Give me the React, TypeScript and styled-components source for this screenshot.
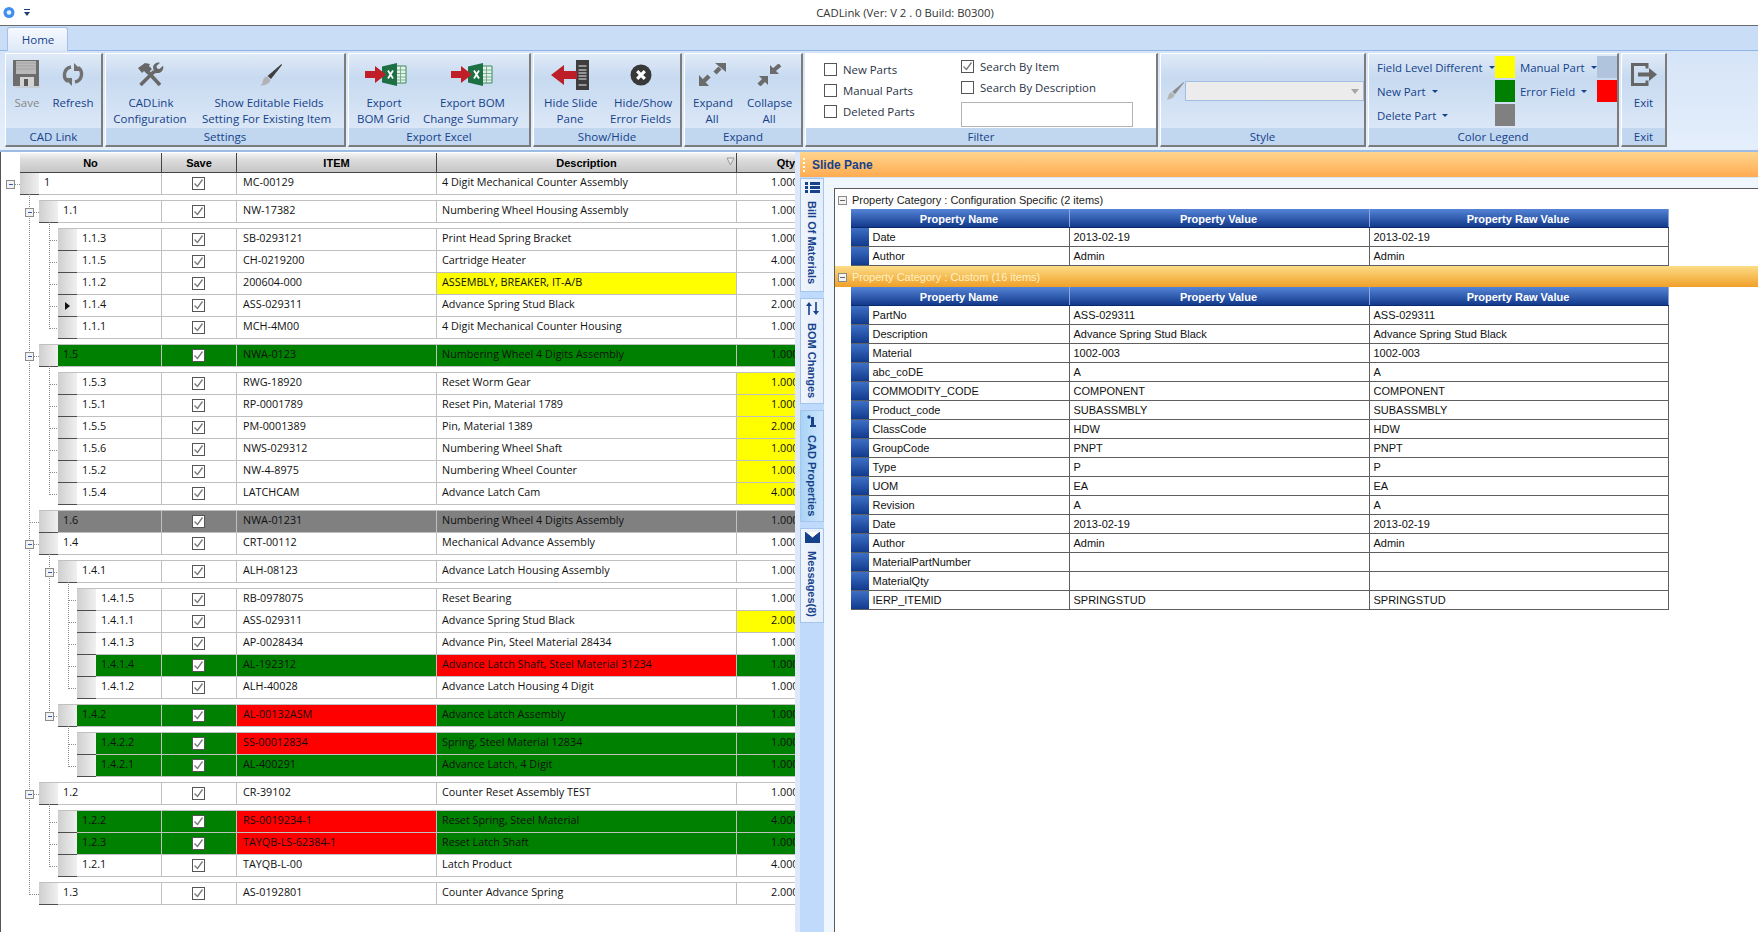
import React from 'react';
import styled, { createGlobalStyle } from 'styled-components';

const GREEN = '#008000';
const RED = '#ff0000';
const YELLOW = '#ffff00';
const GRAY = '#808080';
const UI_FONT = '"Open Sans", "Noto Sans", sans-serif';
const TABLE_FONT = '"Liberation Sans", Arial, sans-serif';

type BomRow = {
  no: string;
  item: string;
  desc: string;
  qty: string;
  level: number;
  gap?: boolean;
  box?: boolean;
  pointer?: boolean;
  rowBg?: string;
  itemBg?: string;
  descBg?: string;
  qtyBg?: string;
};

const bomRows: BomRow[] = [
  { no: '1', item: 'MC-00129', desc: '4 Digit Mechanical Counter Assembly', qty: '1.0000', level: 0, box: true },
  { no: '1.1', item: 'NW-17382', desc: 'Numbering Wheel Housing Assembly', qty: '1.0000', level: 1, gap: true, box: true },
  { no: '1.1.3', item: 'SB-0293121', desc: 'Print Head Spring Bracket', qty: '1.0000', level: 2, gap: true },
  { no: '1.1.5', item: 'CH-0219200', desc: 'Cartridge Heater', qty: '4.0000', level: 2 },
  { no: '1.1.2', item: '200604-000', desc: 'ASSEMBLY, BREAKER, IT-A/B', qty: '1.0000', level: 2, descBg: YELLOW },
  { no: '1.1.4', item: 'ASS-029311', desc: 'Advance Spring Stud Black', qty: '2.0000', level: 2, pointer: true },
  { no: '1.1.1', item: 'MCH-4M00', desc: '4 Digit Mechanical Counter Housing', qty: '1.0000', level: 2 },
  { no: '1.5', item: 'NWA-0123', desc: 'Numbering Wheel 4 Digits Assembly', qty: '1.0000', level: 1, gap: true, box: true, rowBg: GREEN },
  { no: '1.5.3', item: 'RWG-18920', desc: 'Reset Worm Gear', qty: '1.0000', level: 2, gap: true, qtyBg: YELLOW },
  { no: '1.5.1', item: 'RP-0001789', desc: 'Reset Pin, Material 1789', qty: '1.0000', level: 2, qtyBg: YELLOW },
  { no: '1.5.5', item: 'PM-0001389', desc: 'Pin, Material 1389', qty: '2.0000', level: 2, qtyBg: YELLOW },
  { no: '1.5.6', item: 'NWS-029312', desc: 'Numbering Wheel Shaft', qty: '1.0000', level: 2, qtyBg: YELLOW },
  { no: '1.5.2', item: 'NW-4-8975', desc: 'Numbering Wheel Counter', qty: '1.0000', level: 2, qtyBg: YELLOW },
  { no: '1.5.4', item: 'LATCHCAM', desc: 'Advance Latch Cam', qty: '4.0000', level: 2, qtyBg: YELLOW },
  { no: '1.6', item: 'NWA-01231', desc: 'Numbering Wheel 4 Digits Assembly', qty: '1.0000', level: 1, gap: true, rowBg: GRAY },
  { no: '1.4', item: 'CRT-00112', desc: 'Mechanical Advance Assembly', qty: '1.0000', level: 1, box: true },
  { no: '1.4.1', item: 'ALH-08123', desc: 'Advance Latch Housing Assembly', qty: '1.0000', level: 2, gap: true, box: true },
  { no: '1.4.1.5', item: 'RB-0978075', desc: 'Reset Bearing', qty: '1.0000', level: 3, gap: true },
  { no: '1.4.1.1', item: 'ASS-029311', desc: 'Advance Spring Stud Black', qty: '2.0000', level: 3, qtyBg: YELLOW },
  { no: '1.4.1.3', item: 'AP-0028434', desc: 'Advance Pin, Steel Material 28434', qty: '1.0000', level: 3 },
  { no: '1.4.1.4', item: 'AL-192312', desc: 'Advance Latch Shaft, Steel Material 31234', qty: '1.0000', level: 3, rowBg: GREEN, descBg: RED },
  { no: '1.4.1.2', item: 'ALH-40028', desc: 'Advance Latch Housing 4 Digit', qty: '1.0000', level: 3 },
  { no: '1.4.2', item: 'AL-00132ASM', desc: 'Advance Latch Assembly', qty: '1.0000', level: 2, gap: true, box: true, rowBg: GREEN, itemBg: RED },
  { no: '1.4.2.2', item: 'SS-00012834', desc: 'Spring, Steel Material 12834', qty: '1.0000', level: 3, gap: true, rowBg: GREEN, itemBg: RED },
  { no: '1.4.2.1', item: 'AL-400291', desc: 'Advance Latch, 4 Digit', qty: '1.0000', level: 3, rowBg: GREEN },
  { no: '1.2', item: 'CR-39102', desc: 'Counter Reset Assembly TEST', qty: '1.0000', level: 1, gap: true, box: true },
  { no: '1.2.2', item: 'RS-0019234-1', desc: 'Reset Spring, Steel Material', qty: '4.0000', level: 2, gap: true, rowBg: GREEN, itemBg: RED },
  { no: '1.2.3', item: 'TAYQB-LS-62384-1', desc: 'Reset Latch Shaft', qty: '1.0000', level: 2, rowBg: GREEN, itemBg: RED },
  { no: '1.2.1', item: 'TAYQB-L-00', desc: 'Latch Product', qty: '4.0000', level: 2 },
  { no: '1.3', item: 'AS-0192801', desc: 'Counter Advance Spring', qty: '2.0000', level: 1, gap: true },
];

const configProps = [
  ['Date', '2013-02-19', '2013-02-19'],
  ['Author', 'Admin', 'Admin'],
];

const customProps = [
  ['PartNo', 'ASS-029311', 'ASS-029311'],
  ['Description', 'Advance Spring Stud Black', 'Advance Spring Stud Black'],
  ['Material', '1002-003', '1002-003'],
  ['abc_coDE', 'A', 'A'],
  ['COMMODITY_CODE', 'COMPONENT', 'COMPONENT'],
  ['Product_code', 'SUBASSMBLY', 'SUBASSMBLY'],
  ['ClassCode', 'HDW', 'HDW'],
  ['GroupCode', 'PNPT', 'PNPT'],
  ['Type', 'P', 'P'],
  ['UOM', 'EA', 'EA'],
  ['Revision', 'A', 'A'],
  ['Date', '2013-02-19', '2013-02-19'],
  ['Author', 'Admin', 'Admin'],
  ['MaterialPartNumber', '', ''],
  ['MaterialQty', '', ''],
  ['IERP_ITEMID', 'SPRINGSTUD', 'SPRINGSTUD'],
];

const GlobalStyle = createGlobalStyle`
  html, body {
    margin: 0;
    padding: 0;
    background: #fff;
    overflow: hidden;
  }
  * {
    box-sizing: border-box;
  }
`;

const Page = styled.div`
  width: 1758px;
  height: 932px;
  display: flex;
  flex-direction: column;
  overflow: hidden;
  font-family: ${UI_FONT};
  background: #fff;
`;

/* title + tabs */
const TitleBar = styled.div`
  height: 26px;
  flex: none;
  display: flex;
  align-items: center;
  gap: 8px;
  padding-left: 3px;
  background: #fff;
  border-bottom: 1px solid #6b6b6b;
  position: relative;
`;

const TitleText = styled.div`
  flex: 1;
  text-align: center;
  padding-left: 14px;
  font-size: 11.3px;
  color: #333;
`;

const TabStrip = styled.div`
  height: 24px;
  flex: none;
  display: flex;
  align-items: flex-end;
  padding-left: 7px;
  background: #c9ddf6;
`;

const HomeTab = styled.div`
  width: 61px;
  height: 24px;
  margin-bottom: -1px;
  padding-left: 1px;
  display: flex;
  align-items: center;
  justify-content: center;
  font-size: 11.5px;
  color: #15428b;
  background: linear-gradient(#f6f9fe, #dde9f8);
  border: 1px solid #a3c0e8;
  border-bottom: none;
  border-radius: 3px 3px 0 0;
  position: relative;
  z-index: 2;
`;

/* ribbon */
const Ribbon = styled.div`
  height: 102px;
  flex: none;
  display: flex;
  gap: 2px;
  padding: 2px 0 3px 5px;
  border-top: 1px solid #8fb5e6;
  border-bottom: 2px solid #9dbce4;
  background: linear-gradient(#d5e4f7, #e5effc);
`;

const Group = styled.div<{ $w: number }>`
  width: ${(p) => p.$w}px;
  height: 94px;
  flex: none;
  display: flex;
  flex-direction: column;
  border-style: solid;
  border-width: 1px 2px 2px 1px;
  border-color: #fff #7c7c7c #7c7c7c #fff;
`;

const GroupBody = styled.div<{ $pad?: number; $gap?: number; $white?: boolean }>`
  height: 74px;
  flex: none;
  display: flex;
  gap: ${(p) => p.$gap ?? 0}px;
  padding-left: ${(p) => p.$pad ?? 0}px;
  background: ${(p) => (p.$white ? '#fff' : 'linear-gradient(#e0eaf7, #c7daf0 32%, #dbe7f7)')};
`;

const GroupLabel = styled.div`
  height: 17px;
  flex: none;
  display: flex;
  align-items: center;
  justify-content: center;
  font-size: 11.5px;
  color: #15428b;
  background: #c1d7f0;
`;

const BigButton = styled.div<{ $w: number; $off?: boolean }>`
  width: ${(p) => p.$w}px;
  flex: none;
  font-size: 11.5px;
  line-height: 16px;
  text-align: center;
  white-space: nowrap;
  color: ${(p) => (p.$off ? '#888' : '#15428b')};
`;

const IconSlot = styled.div<{ $shift?: number }>`
  height: 41px;
  width: 100%;
  display: flex;
  align-items: center;
  justify-content: center;
  padding-left: ${(p) => p.$shift ?? 0}px;
`;

// the first caption line of some buttons sits off the second line's centre
const CaptionLine = styled.span<{ $shift: number }>`
  display: block;
  padding-left: ${(p) => p.$shift}px;
`;

/* filter */
const FilterCol = styled.div<{ $w: number; $top: number; $left: number; $gap: number }>`
  width: ${(p) => p.$w}px;
  margin-left: ${(p) => p.$left}px;
  padding-top: ${(p) => p.$top}px;
  display: flex;
  flex-direction: column;
  gap: ${(p) => p.$gap}px;
`;

const CheckRow = styled.label`
  height: 13px;
  display: flex;
  align-items: center;
  gap: 6px;
  font-size: 11.4px;
  color: #2a3346;
  white-space: nowrap;
`;

const CheckBoxFrame = styled.span`
  width: 13px;
  height: 13px;
  flex: none;
  display: flex;
  align-items: center;
  justify-content: center;
  background: #fff;
  border: 1px solid #555;
`;

const SearchInput = styled.div`
  width: 172px;
  height: 25px;
  background: #fff;
  border: 1px solid #b4b4b4;
`;

/* style */
const StyleBody = styled.div`
  height: 74px;
  flex: none;
  display: flex;
  align-items: center;
  gap: 1px;
  padding-left: 5px;
  background: linear-gradient(#e0eaf7, #c7daf0 32%, #dbe7f7);
`;

const Combo = styled.div`
  width: 179px;
  height: 20px;
  display: flex;
  align-items: center;
  justify-content: flex-end;
  padding-right: 4px;
  background: #ececec;
  border: 1px solid #a3bde3;
`;

const ComboArrow = styled.span`
  border-left: 4px solid transparent;
  border-right: 4px solid transparent;
  border-top: 5px solid #a6a6a6;
`;

/* legend */
const LegendGrid = styled.div`
  height: 74px;
  flex: none;
  display: grid;
  grid-template-columns: 118px 20px 82px 20px;
  grid-template-rows: repeat(3, 22px);
  row-gap: 2px;
  padding: 2px 0 0 8px;
  background: linear-gradient(#e0eaf7, #c7daf0 32%, #dbe7f7);
`;

const LegendLabel = styled.div<{ $indent?: number }>`
  display: flex;
  align-items: center;
  gap: 6px;
  padding-left: ${(p) => p.$indent ?? 0}px;
  font-size: 11.4px;
  color: #15428b;
  white-space: nowrap;
`;

const Caret = styled.span`
  border-left: 3px solid transparent;
  border-right: 3px solid transparent;
  border-top: 3px solid #15428b;
`;

const Swatch = styled.div<{ $bg: string }>`
  background: ${(p) => p.$bg};
`;

/* main */
const Main = styled.div`
  flex: 1;
  min-height: 0;
  display: flex;
`;

const GridPane = styled.div`
  width: 795px;
  flex: none;
  padding-top: 1px;
  overflow: hidden;
  background: #fff;
  border-left: 1px solid #555;
  position: relative;
`;

const HeaderRow = styled.div`
  height: 20px;
  width: 840px;
  margin-left: 19px;
  display: flex;
  border-bottom: 1px solid #444;
  background: linear-gradient(#f4f4f4, #dcdcdc 35%, #c6c6c6);
`;

const HeaderCell = styled.div<{ $w: number; $end?: boolean }>`
  width: ${(p) => p.$w}px;
  flex: none;
  display: flex;
  align-items: center;
  justify-content: ${(p) => (p.$end ? 'flex-end' : 'center')};
  font-family: ${TABLE_FONT};
  font-size: 11px;
  font-weight: 700;
  color: #000;
  border-right: 1px solid #444;
  position: relative;
`;

const SortMark = styled.svg`
  position: absolute;
  right: 1px;
  top: 4px;
`;

const Row = styled.div<{ $gap?: boolean; $level: number }>`
  height: 22px;
  width: 860px;
  display: flex;
  margin-top: ${(p) => (p.$gap ? 6 : 0)}px;
  padding-left: ${(p) => 19 + p.$level * 19}px;
  position: relative;
  z-index: 1;
  &::before {
    content: '';
    display: ${(p) => (p.$gap ? 'block' : 'none')};
    position: absolute;
    left: ${(p) => 19 + p.$level * 19}px;
    right: 0;
    top: -1px;
    height: 1px;
    background: #c0c0c0;
  }
`;

const Indicator = styled.div`
  width: 19px;
  flex: none;
  display: flex;
  align-items: center;
  justify-content: center;
  background: linear-gradient(90deg, #cfcfcf, #f0f0f0);
  border-bottom: 1px solid #4d4d4d;
`;

const PointerMark = styled.span`
  border-top: 4px solid transparent;
  border-bottom: 4px solid transparent;
  border-left: 5px solid #111;
`;

const Cell = styled.div<{ $w?: number; $bg?: string; $pad: number }>`
  ${(p) => (p.$w ? `width: ${p.$w}px; flex: none;` : 'flex: 1; min-width: 0;')}
  display: flex;
  align-items: center;
  padding: 0 0 5px ${(p) => p.$pad}px;
  font-size: 10.8px;
  color: #111;
  white-space: nowrap;
  overflow: hidden;
  background: ${(p) => p.$bg ?? '#fff'};
  border-right: 1px solid #c0c0c0;
  border-bottom: 1px solid #c0c0c0;
`;

const SaveCell = styled.div<{ $bg?: string }>`
  width: 75px;
  flex: none;
  display: flex;
  align-items: center;
  justify-content: center;
  padding: 0 2px 1px 0;
  background: ${(p) => p.$bg ?? '#fff'};
  border-right: 1px solid #c0c0c0;
  border-bottom: 1px solid #c0c0c0;
`;

const TreeLines = styled.svg`
  position: absolute;
  left: 0;
  top: 21px;
  z-index: 2;
  pointer-events: none;
`;

const Splitter = styled.div`
  width: 5px;
  flex: none;
  background: #dde9fb;
`;

const SlidePane = styled.div`
  flex: 1;
  min-width: 0;
  display: flex;
  flex-direction: column;
`;

const SlideHeader = styled.div`
  height: 25px;
  flex: none;
  display: flex;
  align-items: center;
  gap: 7px;
  padding-left: 3px;
  font-family: ${TABLE_FONT};
  font-size: 12px;
  font-weight: 700;
  color: #15428b;
  background: linear-gradient(#ffd58e, #ffab50);
`;

const Grip = styled.span`
  width: 2px;
  height: 14px;
  background: repeating-linear-gradient(#fff 0 2px, transparent 2px 4px);
`;

const SlideBody = styled.div`
  flex: 1;
  min-height: 0;
  display: flex;
`;

const TabRail = styled.div`
  width: 24px;
  flex: none;
  display: flex;
  flex-direction: column;
  gap: 6px;
  padding-top: 1px;
  background: #bfdafb;
`;

const SideTab = styled.div<{ $h: number; $active?: boolean }>`
  height: ${(p) => p.$h}px;
  flex: none;
  display: flex;
  flex-direction: column;
  align-items: center;
  gap: 8px;
  padding-top: 3px;
  border: 1px solid #a5c4ee;
  background: ${(p) => (p.$active ? 'linear-gradient(90deg, #a9d4f6, #cde5fb)' : 'linear-gradient(90deg, #f0f5fd, #e4edfa)')};
`;

const SideTabText = styled.span`
  writing-mode: vertical-rl;
  font-family: ${TABLE_FONT};
  font-size: 11px;
  font-weight: 700;
  color: #15428b;
  white-space: nowrap;
`;

const PropsArea = styled.div`
  flex: 1;
  min-width: 0;
  padding: 10px 0 0 10px;
  background: #eff6fe;
  border-top: 1px solid #d7e5f8;
  display: flex;
`;

const PropsInner = styled.div`
  flex: 1;
  min-width: 0;
  background: #fff;
  border-top: 1px solid #5a5a5a;
  border-left: 1px solid #5a5a5a;
  font-family: ${TABLE_FONT};
  font-size: 11px;
`;

const CategoryRow = styled.div<{ $selected?: boolean }>`
  height: ${(p) => (p.$selected ? 21 : 20)}px;
  display: flex;
  align-items: center;
  gap: 5px;
  padding: ${(p) => (p.$selected ? 1 : 2)}px 0 0 3px;
  color: ${(p) => (p.$selected ? '#fff1c4' : '#222')};
  background: ${(p) => (p.$selected ? 'linear-gradient(#fbdc87, #f0a028)' : '#fff')};
`;

const CategoryBox = styled.span`
  width: 9px;
  height: 9px;
  flex: none;
  display: flex;
  align-items: center;
  justify-content: center;
  border: 1px solid #8a8a8a;
  background: #f3f3f3;
  &::after {
    content: '';
    width: 5px;
    height: 1px;
    background: #666;
  }
`;

const PropTable = styled.div`
  width: 818px;
  margin-left: 16px;
`;

const PropHeader = styled.div`
  height: 19px;
  display: grid;
  grid-template-columns: 219px 300px 299px;
  background: linear-gradient(#5584d6, #12398c);
  border-bottom: 1px solid #0b2a6a;
`;

const PropHeaderCell = styled.div`
  display: flex;
  align-items: center;
  justify-content: center;
  padding: 1px 2px 0 0;
  color: #fff;
  font-weight: 700;
  border-right: 1px solid #8aa7dc;
`;

const PropRow = styled.div`
  height: 19px;
  display: grid;
  grid-template-columns: 18px 201px 300px 299px;
`;

const PropIndicator = styled.div`
  background: linear-gradient(#3e70c6, #113a8d);
  border-bottom: 1px solid #5f5f5f;
`;

const PropCell = styled.div`
  display: flex;
  align-items: center;
  padding-left: 3.5px;
  color: #111;
  white-space: nowrap;
  border-right: 1px solid #5f5f5f;
  border-bottom: 1px solid #5f5f5f;
`;

/* icons */
const AppLogo = () => (
  <svg width="12" height="13" viewBox="0 0 12 13">
    <circle cx="6" cy="6.5" r="5.5" fill="#3f8ef0" />
    <circle cx="6" cy="6.5" r="2.3" fill="#eaf4ff" />
  </svg>
);

const QuickAccess = () => (
  <svg width="6" height="7" viewBox="0 0 6 7" style={{ marginLeft: 1 }}>
    <rect x="0" y="0" width="6" height="1" fill="#1c3f7c" />
    <path d="M0 3h6L3 7z" fill="#1c3f7c" />
  </svg>
);

const SaveIcon = () => (
  <svg width="28" height="29" viewBox="0 0 28 29">
    <path d="M0 0h26v26H0z" fill="#6d6d6d" />
    <path d="M3 1h20v13H3z" fill="#b9b9b9" />
    <path d="M3 3h20M3 6h20M3 9h20" stroke="#a4a4a4" />
    <path d="M7 17h14v9H7z" fill="#d3d3d3" />
    <path d="M11 19h4v7h-4z" fill="#5a5a5a" />
    <path d="M26 26l2 2H4l-4-2z" fill="#c8ced6" />
  </svg>
);

const RefreshIcon = () => (
  <svg width="24" height="23" viewBox="0 0 24 23" fill="none">
    <path d="M10 4A8 8 0 0 0 7 18.5" stroke="#717171" strokeWidth="3.4" />
    <path d="M14 19A8 8 0 0 0 17 4.5" stroke="#717171" strokeWidth="3.4" />
    <path d="M3 15h8v8z" fill="#717171" />
    <path d="M21 8h-8V0z" fill="#717171" />
  </svg>
);

const ToolsIcon = () => (
  <svg width="27" height="26" viewBox="0 0 27 26" fill="none">
    <path d="M10 9l13 14" stroke="#676767" strokeWidth="3.6" />
    <path d="M1 6l7-5 5 1-1 2 3 3-5 5-3-3-2 2z" fill="#676767" />
    <path d="M3.5 23L17 9.5" stroke="#676767" strokeWidth="3.6" />
    <path d="M16 4.5A5.5 5.5 0 0 1 23 .8L19.5 4l.5 2.5 2.5.5L26 3.8A5.5 5.5 0 0 1 20 11l-3 .5z" fill="#676767" />
  </svg>
);

const BrushIcon = ({ size = 22, dark = '#3f3f3f' }: { size?: number; dark?: string }) => (
  <svg width={size} height={size} viewBox="0 0 22 22">
    <path d="M21.5 0L22 1 11 15 7.5 12z" fill={dark} />
    <path d="M6.5 12.5l4 3.5c-1 3.5-5 5.5-10 5.5 2-1.5 2-3 2.5-5 .5-2 1.5-3.5 3.5-4z" fill="#b2b2b2" />
  </svg>
);

const ExcelIcon = () => (
  <svg width="42" height="23" viewBox="0 0 42 23">
    <path d="M31 3h10v17H31z" fill="#e6f1ea" stroke="#3b8a5f" />
    <path d="M31 7h10M31 10.5h10M31 14h10M31 17h10M35.5 3v17" stroke="#5ea37d" strokeWidth=".8" />
    <path d="M17 3.5L32 0v23l-15-3.5z" fill="#1c7044" />
    <path d="M23 7.5l5 8M28 7.5l-5 8" stroke="#fff" strokeWidth="1.8" />
    <path d="M0 8h10V3l11 8.5L10 20v-5H0z" fill="#c01f28" />
  </svg>
);

const HidePaneIcon = () => (
  <svg width="38" height="30" viewBox="0 0 38 30">
    <path d="M25 0h13v30H25z" fill="#3d3d3d" />
    <path d="M27.5 6h8M27.5 10h8M27.5 13h8M27.5 16h8M27.5 19h8M27.5 25h8" stroke="#eee" />
    <path d="M0 15L13 5v6h13v8H13v6z" fill="#bc1f27" />
  </svg>
);

const CloseCircleIcon = () => (
  <svg width="22" height="22" viewBox="0 0 22 22">
    <circle cx="11" cy="11" r="10.5" fill="#383838" />
    <path d="M7.2 7.2l7.6 7.6M14.8 7.2l-7.6 7.6" stroke="#fff" strokeWidth="3.2" />
  </svg>
);

const ExpandIcon = () => (
  <svg width="27" height="23" viewBox="0 0 27 23" fill="none">
    <path d="M16 0h11v9z" fill="#6b6b6b" />
    <path d="M21 5l-5 5" stroke="#6b6b6b" strokeWidth="4.5" />
    <path d="M0 23V12l10 11z" fill="#6b6b6b" />
    <path d="M5 18l5-5" stroke="#6b6b6b" strokeWidth="4.5" />
  </svg>
);

const CollapseIcon = () => (
  <svg width="25" height="22" viewBox="0 0 25 22" fill="none">
    <path d="M13 10V1l9 9z" fill="#6b6b6b" />
    <path d="M17 6l6-5" stroke="#6b6b6b" strokeWidth="4.2" />
    <path d="M11 12v9l-9-9z" fill="#6b6b6b" />
    <path d="M7 16l-5 5" stroke="#6b6b6b" strokeWidth="4.2" />
  </svg>
);

const ExitIcon = () => (
  <svg width="26" height="23" viewBox="0 0 26 23" fill="none">
    <path d="M16 5.5V1.5H1.5v20H16v-4" stroke="#666" strokeWidth="3" />
    <path d="M7 9.5h11V5l8 6.5-8 6.5v-4.5H7z" fill="#666" />
  </svg>
);

const ListIcon = () => (
  <svg width="15" height="11" viewBox="0 0 15 11">
    <path d="M0 0h3v3H0zM0 4h3v3H0zM0 8h3v3H0zM5 0h10v3H5zM5 4h10v3H5zM5 8h10v3H5z" fill="#15428b" />
  </svg>
);

const SwapIcon = () => (
  <svg width="15" height="13" viewBox="0 0 15 13" fill="none">
    <path d="M4 13V3M11 0v10" stroke="#15428b" strokeWidth="1.6" />
    <path d="M1 4l3-4 3 4zM8 9l3 4 3-4z" fill="#15428b" />
  </svg>
);

const InfoIcon = () => (
  <svg width="15" height="13" viewBox="0 0 15 13">
    <circle cx="4" cy="3" r="1.7" fill="#15428b" />
    <path d="M6 3h3v8h2v2H5v-2h1z" fill="#15428b" />
  </svg>
);

const MailIcon = () => (
  <svg width="15" height="11" viewBox="0 0 15 11">
    <path d="M0 0h15v11H0z" fill="#15428b" />
    <path d="M0 0l7.5 6L15 0" fill="#fff" />
    <path d="M0 0l7.5 6L15 0" fill="none" stroke="#15428b" />
  </svg>
);

const CheckMark = () => (
  <svg width="11" height="11" viewBox="0 0 11 11" fill="none">
    <path d="M1.5 5.5l3 3 5-7" stroke="#777" strokeWidth="1.3" />
  </svg>
);

const Check = ({ on }: { on?: boolean }) => <CheckBoxFrame>{on && <CheckMark />}</CheckBoxFrame>;

const treeX = (level: number) => 9.5 + level * 19.25;

// tree connectors are drawn from the row list, same 22px rows and 6px breaks as the grid
const TreeOverlay = () => {
  let y = 0;
  const tops = bomRows.map((r) => {
    if (r.gap) y += 6;
    const top = y;
    y += 22;
    return top;
  });
  const lines: React.ReactNode[] = [];
  bomRows.forEach((r, i) => {
    const cy = Math.floor(tops[i] + 11) + 0.5;
    const x = Math.floor(treeX(r.level)) + 0.5;
    lines.push(<line key={`h${i}`} x1={x} x2={19 + r.level * 19} y1={cy} y2={cy} />);
    if (r.level > 0) {
      let parent = i - 1;
      while (bomRows[parent].level >= r.level) parent--;
      lines.push(<line key={`v${i}`} x1={x} x2={x} y1={tops[parent] + 21} y2={cy} />);
    }
  });
  return (
    <TreeLines width="90" height="740">
      <g stroke="#8c8c8c" strokeDasharray="1 1" shapeRendering="crispEdges">
        {lines}
      </g>
      {bomRows.map((r, i) =>
        r.box ? (
          <g key={i} shapeRendering="crispEdges">
            <rect x={Math.floor(treeX(r.level)) - 3.5} y={tops[i] + 7.5} width="8" height="8" fill="#f2f2f2" stroke="#8c8c8c" />
            <line x1={Math.floor(treeX(r.level)) - 1.5} x2={Math.floor(treeX(r.level)) + 2.5} y1={tops[i] + 11.5} y2={tops[i] + 11.5} stroke="#3558b0" />
          </g>
        ) : null,
      )}
    </TreeLines>
  );
};

const BomGrid = () => (
  <GridPane>
    <HeaderRow>
      <HeaderCell $w={142}>No</HeaderCell>
      <HeaderCell $w={75}>Save</HeaderCell>
      <HeaderCell $w={200}>ITEM</HeaderCell>
      <HeaderCell $w={300}>
        Description
        <SortMark width="9" height="9" viewBox="0 0 9 9">
          <path d="M1 1h7L4.5 8z" fill="#e8e8e8" stroke="#999" />
        </SortMark>
      </HeaderCell>
      <HeaderCell $w={59} $end>
        Qty
      </HeaderCell>
    </HeaderRow>
    <TreeOverlay />
    {bomRows.map((r) => (
      <Row key={r.no} $gap={r.gap} $level={r.level}>
        <Indicator>{r.pointer && <PointerMark />}</Indicator>
        <Cell $w={142 - 19 - r.level * 19} $bg={r.rowBg} $pad={5}>
          {r.no}
        </Cell>
        <SaveCell $bg={r.rowBg}>
          <Check on />
        </SaveCell>
        <Cell $w={200} $bg={r.itemBg ?? r.rowBg} $pad={6}>
          {r.item}
        </Cell>
        <Cell $w={300} $bg={r.descBg ?? r.rowBg} $pad={5}>
          {r.desc}
        </Cell>
        <Cell $bg={r.qtyBg ?? r.rowBg} $pad={34}>
          {r.qty}
        </Cell>
      </Row>
    ))}
  </GridPane>
);

const PropertyGrid = ({ rows }: { rows: string[][] }) => (
  <PropTable>
    <PropHeader>
      <PropHeaderCell>Property Name</PropHeaderCell>
      <PropHeaderCell>Property Value</PropHeaderCell>
      <PropHeaderCell>Property Raw Value</PropHeaderCell>
    </PropHeader>
    {rows.map((r, i) => (
      <PropRow key={i}>
        <PropIndicator />
        <PropCell>{r[0]}</PropCell>
        <PropCell>{r[1]}</PropCell>
        <PropCell>{r[2]}</PropCell>
      </PropRow>
    ))}
  </PropTable>
);

const App = () => (
  <Page>
    <GlobalStyle />
    <TitleBar>
      <AppLogo />
      <QuickAccess />
      <TitleText>CADLink (Ver: V 2 . 0 Build: B0300)</TitleText>
    </TitleBar>
    <TabStrip>
      <HomeTab>Home</HomeTab>
    </TabStrip>
    <Ribbon>
      <Group $w={98}>
        <GroupBody $pad={1}>
          <BigButton $w={40} $off>
            <IconSlot>
              <SaveIcon />
            </IconSlot>
            Save
          </BigButton>
          <BigButton $w={52}>
            <IconSlot>
              <RefreshIcon />
            </IconSlot>
            Refresh
          </BigButton>
        </GroupBody>
        <GroupLabel>CAD Link</GroupLabel>
      </Group>
      <Group $w={241}>
        <GroupBody $pad={7} $gap={15}>
          <BigButton $w={74}>
            <IconSlot>
              <ToolsIcon />
            </IconSlot>
            <CaptionLine $shift={2}>CADLink</CaptionLine>
            Configuration
          </BigButton>
          <BigButton $w={126}>
            <IconSlot $shift={12}>
              <BrushIcon />
            </IconSlot>
            <CaptionLine $shift={8}>Show Editable Fields</CaptionLine>
            Setting For Existing Item
          </BigButton>
        </GroupBody>
        <GroupLabel>Settings</GroupLabel>
      </Group>
      <Group $w={183}>
        <GroupBody $pad={8} $gap={14}>
          <BigButton $w={52}>
            <IconSlot $shift={5}>
              <ExcelIcon />
            </IconSlot>
            <CaptionLine $shift={2}>Export</CaptionLine>
            BOM Grid
          </BigButton>
          <BigButton $w={95}>
            <IconSlot $shift={3}>
              <ExcelIcon />
            </IconSlot>
            <CaptionLine $shift={4}>Export BOM</CaptionLine>
            Change Summary
          </BigButton>
        </GroupBody>
        <GroupLabel>Export Excel</GroupLabel>
      </Group>
      <Group $w={149}>
        <GroupBody $pad={10} $gap={14}>
          <BigButton $w={52}>
            <IconSlot>
              <HidePaneIcon />
            </IconSlot>
            Hide Slide
            <br />
            Pane
          </BigButton>
          <BigButton $w={58}>
            <IconSlot $shift={4}>
              <CloseCircleIcon />
            </IconSlot>
            <CaptionLine $shift={4}>Hide/Show</CaptionLine>
            Error Fields
          </BigButton>
        </GroupBody>
        <GroupLabel>Show/Hide</GroupLabel>
      </Group>
      <Group $w={119}>
        <GroupBody $pad={8} $gap={16}>
          <BigButton $w={38}>
            <IconSlot>
              <ExpandIcon />
            </IconSlot>
            Expand
            <br />
            All
          </BigButton>
          <BigButton $w={44}>
            <IconSlot>
              <CollapseIcon />
            </IconSlot>
            Collapse
            <br />
            All
          </BigButton>
        </GroupBody>
        <GroupLabel>Expand</GroupLabel>
      </Group>
      <Group $w={353}>
        <GroupBody $white>
          <FilterCol $w={137} $left={18} $top={9} $gap={8}>
            <CheckRow>
              <Check />
              New Parts
            </CheckRow>
            <CheckRow>
              <Check />
              Manual Parts
            </CheckRow>
            <CheckRow>
              <Check />
              Deleted Parts
            </CheckRow>
          </FilterCol>
          <FilterCol $w={172} $left={0} $top={6} $gap={8}>
            <CheckRow>
              <Check on />
              Search By Item
            </CheckRow>
            <CheckRow>
              <Check />
              Search By Description
            </CheckRow>
            <SearchInput />
          </FilterCol>
        </GroupBody>
        <GroupLabel>Filter</GroupLabel>
      </Group>
      <Group $w={206}>
        <StyleBody>
          <BrushIcon size={18} dark="#8c8c8c" />
          <Combo>
            <ComboArrow />
          </Combo>
        </StyleBody>
        <GroupLabel>Style</GroupLabel>
      </Group>
      <Group $w={251}>
        <LegendGrid>
          <LegendLabel>
            Field Level Different <Caret />
          </LegendLabel>
          <Swatch $bg={YELLOW} />
          <LegendLabel $indent={5}>
            Manual Part <Caret />
          </LegendLabel>
          <Swatch $bg="#b0c4de" />
          <LegendLabel>
            New Part <Caret />
          </LegendLabel>
          <Swatch $bg={GREEN} />
          <LegendLabel $indent={5}>
            Error Field <Caret />
          </LegendLabel>
          <Swatch $bg={RED} />
          <LegendLabel>
            Delete Part <Caret />
          </LegendLabel>
          <Swatch $bg={GRAY} />
        </LegendGrid>
        <GroupLabel>Color Legend</GroupLabel>
      </Group>
      <Group $w={46}>
        <GroupBody>
          <BigButton $w={43}>
            <IconSlot>
              <ExitIcon />
            </IconSlot>
            Exit
          </BigButton>
        </GroupBody>
        <GroupLabel>Exit</GroupLabel>
      </Group>
    </Ribbon>
    <Main>
      <BomGrid />
      <Splitter />
      <SlidePane>
        <SlideHeader>
          <Grip />
          Slide Pane
        </SlideHeader>
        <SlideBody>
          <TabRail>
            <SideTab $h={114}>
              <ListIcon />
              <SideTabText>Bill Of Materials</SideTabText>
            </SideTab>
            <SideTab $h={106}>
              <SwapIcon />
              <SideTabText>BOM Changes</SideTabText>
            </SideTab>
            <SideTab $h={112} $active>
              <InfoIcon />
              <SideTabText>CAD Properties</SideTabText>
            </SideTab>
            <SideTab $h={95}>
              <MailIcon />
              <SideTabText>Messages(8)</SideTabText>
            </SideTab>
          </TabRail>
          <PropsArea>
            <PropsInner>
              <CategoryRow>
                <CategoryBox />
                Property Category : Configuration Specific (2 items)
              </CategoryRow>
              <PropertyGrid rows={configProps} />
              <CategoryRow $selected>
                <CategoryBox />
                Property Category : Custom (16 items)
              </CategoryRow>
              <PropertyGrid rows={customProps} />
            </PropsInner>
          </PropsArea>
        </SlideBody>
      </SlidePane>
    </Main>
  </Page>
);

export default App;
